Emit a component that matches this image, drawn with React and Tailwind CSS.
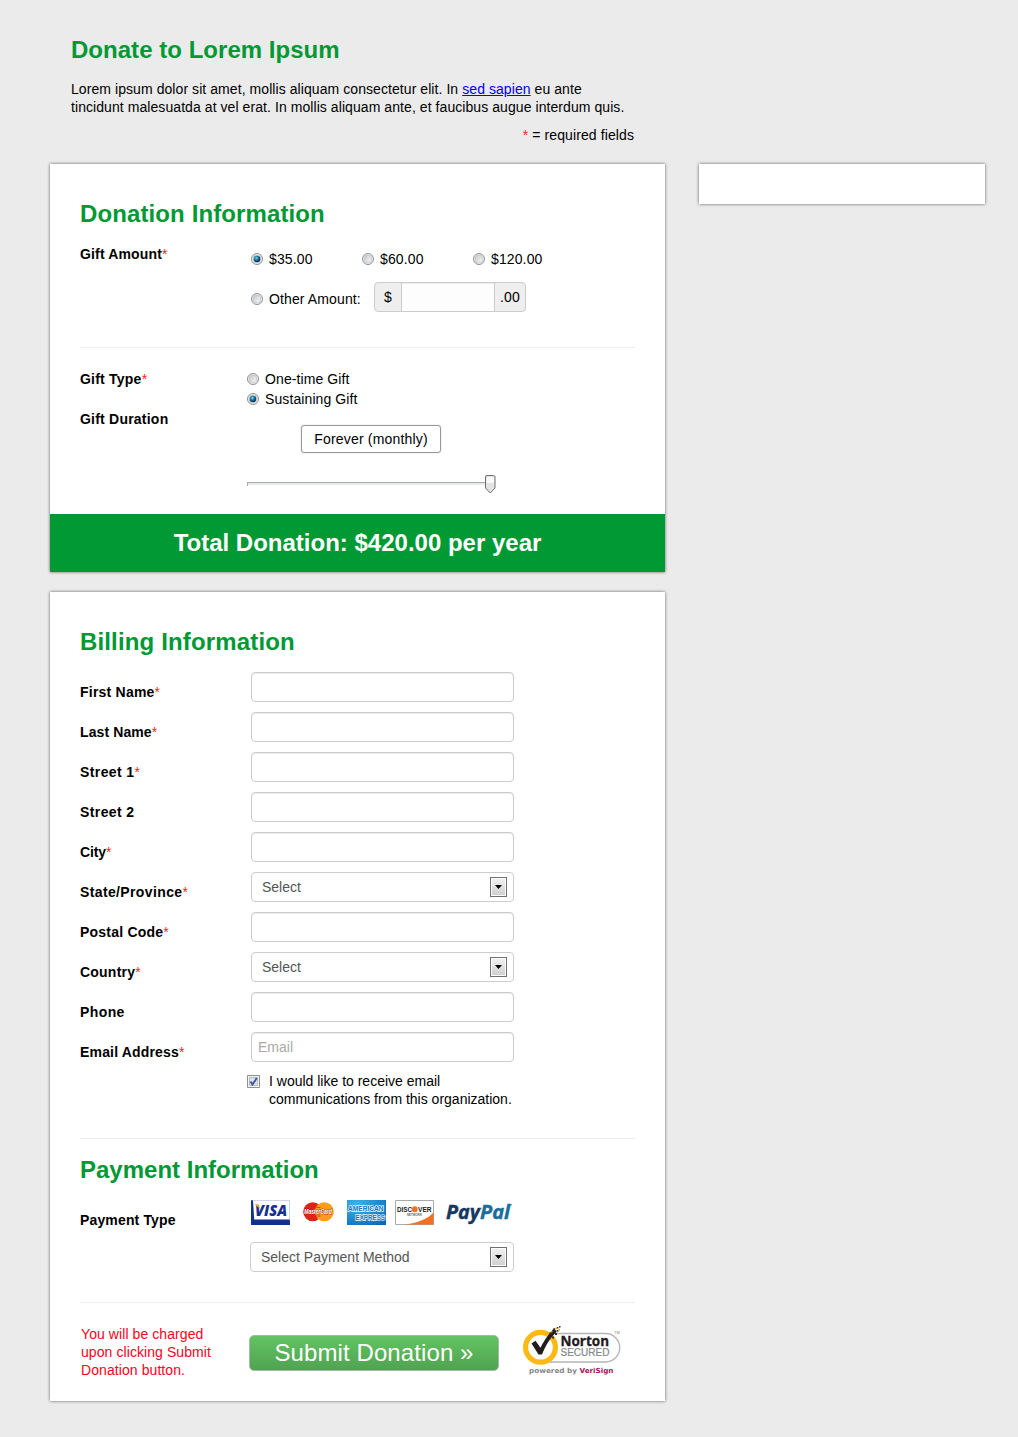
import React from "react";

const Star = () => <span className="font-normal tracking-normal text-[#ff2020]">*</span>;

const Heading = ({ children, className = "tracking-[0.11px]" }) => (
  <h2 className={"h-7 whitespace-nowrap text-2xl leading-7 font-bold text-[#009933] " + className}>{children}</h2>
);

const Radio = ({ id, checked }) => (
  <svg width="13" height="13" viewBox="0 0 13 13" className="block shrink-0">
    <defs>
      <linearGradient id={id + "g"} x1="0" y1="0" x2="1" y2="1">
        <stop offset="0" stopColor="#c4c8cb" />
        <stop offset="1" stopColor="#f8f8f8" />
      </linearGradient>
      <radialGradient id={id + "d"} cx="0.4" cy="0.35" r="0.6">
        <stop offset="0" stopColor="#8fdcf8" />
        <stop offset="0.45" stopColor="#2282ad" />
        <stop offset="1" stopColor="#0b2f4c" />
      </radialGradient>
    </defs>
    <circle cx="6" cy="6" r="5.5" fill="#f4f4f4" stroke="#8e8f8f" />
    <circle cx="6" cy="6" r="4" fill={"url(#" + id + "g)"} stroke="#b4b8bb" strokeWidth="0.6" />
    {checked && <circle cx="6" cy="6" r="3.3" fill={"url(#" + id + "d)"} />}
  </svg>
);

const Arrow = () => (
  <span className="flex h-5 w-[17px] items-center justify-center border border-[#707070] bg-linear-to-b from-[#f2f2f2] to-[#cfcfcf] shadow-[inset_0_0_0_1px_#fcfcfc]">
    <svg width="7" height="4" viewBox="0 0 7 4"><path d="M0 0h7L3.5 4z" fill="#000" /></svg>
  </span>
);

const Select = ({ children, className = "w-[263px]" }) => (
  <div className={"flex h-[30px] items-center justify-between rounded border border-[#cccccc] bg-white pr-1.5 pl-2.5 text-[#555555] " + className}>
    <span>{children}</span>
    <Arrow />
  </div>
);

const Row = ({ label, required, children, track = "tracking-[0.22px]" }) => (
  <div className="flex h-10">
    <div className={"w-[171px] pt-[11px] font-bold " + track}>{label}{required && <Star />}</div>
    {children}
  </div>
);

const Input = ({ children }) => (
  <div className="h-[30px] w-[263px] rounded border border-[#cccccc] bg-white pt-[5px] pl-1.5 text-[#aaaaaa] shadow-[inset_0_1px_1px_rgba(0,0,0,0.075)]">{children}</div>
);

const Visa = () => (
  <svg width="39" height="25" viewBox="0 0 39 25">
    <path d="M0 0H39V25H0z" fill="#fff" />
    <path d="M0 0h2l1.200 19.500H39V25H0z" fill="#10318f" />
    <path d="M0 .3H38.700V21" fill="none" stroke="#9aa6cc" strokeWidth="0.6" />
    <text x="4" y="15.6" fontSize="16" fontWeight="800" fontStyle="italic" fill="#15308f" textLength="32" lengthAdjust="spacingAndGlyphs" fontFamily="Open Sans, sans-serif">VISA</text>
    <path d="M3.500 4.200h4l1.500 4.500z" fill="#e8a435" />
  </svg>
);

const MasterCard = () => (
  <svg width="31" height="20" viewBox="0 0 31 20" className="overflow-visible">
    <circle cx="9.7" cy="9.800" r="9.5" fill="#dc2417" />
    <circle cx="21.3" cy="9.800" r="9.5" fill="#f89d1c" />
    <path d="M13.500 5.500h4M13 14h4.500" stroke="#dc2417" strokeWidth="0.8" />
    <text x="1.3" y="12.4" fontSize="7.4" fontWeight="700" fontStyle="italic" fill="#fff" stroke="#a8281a" strokeWidth="0.8" paintOrder="stroke" textLength="27.500" lengthAdjust="spacingAndGlyphs" fontFamily="Liberation Sans, sans-serif">MasterCard</text>
  </svg>
);

const Amex = () => (
  <svg width="39" height="25" viewBox="0 0 39 25">
    <defs>
      <radialGradient id="amex" cx="0.25" cy="0.2" r="1">
        <stop offset="0" stopColor="#3db6e8" />
        <stop offset="1" stopColor="#0a68ba" />
      </radialGradient>
    </defs>
    <path d="M0 0H39V25H0z" fill="url(#amex)" />
    <g fontFamily="Liberation Sans, sans-serif" fontWeight="700" fill="#1474bd" stroke="#e8f6fd" strokeWidth="1.5" paintOrder="stroke" fontSize="7.6">
      <text x="1" y="11.4" textLength="35.500" lengthAdjust="spacingAndGlyphs">AMERICAN</text>
      <text x="8.5" y="19.600" textLength="29.500" lengthAdjust="spacingAndGlyphs">EXPRESS</text>
    </g>
  </svg>
);

const Discover = () => (
  <svg width="39" height="25" viewBox="0 0 39 25">
    <path d="M.5.5h38v24H.5z" fill="#fff" stroke="#a9a9a9" />
    <path d="M38.5 12.500v12H10C24 22.500 33 18.500 38.500 12.500z" fill="#f36f21" />
    <g fontFamily="Liberation Sans, sans-serif" fontWeight="700" fill="#222">
      <text x="2" y="12" fontSize="8" textLength="15" lengthAdjust="spacingAndGlyphs">DISC</text>
      <circle cx="19.800" cy="9.200" r="2.900" fill="#f36f21" />
      <text x="23" y="12" fontSize="8" textLength="13.500" lengthAdjust="spacingAndGlyphs">VER</text>
      <text x="12" y="16.200" fontSize="3.400" fill="#666" textLength="15" lengthAdjust="spacingAndGlyphs">NETWORK</text>
    </g>
  </svg>
);

const PayPal = () => (
  <svg width="68" height="25" viewBox="0 0 68 25" className="overflow-visible">
    <g fontFamily="Open Sans, sans-serif" fontWeight="700" fontStyle="italic" fontSize="19.500" strokeWidth="0.400">
      <text x="1" y="18.500" fill="#16375f" stroke="#16375f" textLength="34" lengthAdjust="spacingAndGlyphs">Pay</text>
      <text x="35" y="18.500" fill="#1a6d9b" stroke="#1a6d9b" textLength="30" lengthAdjust="spacingAndGlyphs">Pal</text>
    </g>
    <path d="M65 4.800h2" stroke="#1a6d9b" strokeWidth="0.800" />
  </svg>
);

const Norton = () => (
  <svg width="100" height="52" viewBox="0 0 100 52" className="overflow-visible">
    <path d="M18 8.500H83.500a14 14 0 0 1 0 28.500H18" fill="#fff" stroke="#b5b5b5" strokeWidth="1.300" />
    <circle cx="18.500" cy="22.300" r="14.900" fill="#fff" stroke="#fdb913" strokeWidth="5.200" />
    <path d="M9.500 18.500l4-2.800 5 7C23 14 27 8.500 32.500 3l2 4C28 13 24 20 20 29.500h-3.500z" fill="#211d1e" />
    <path d="M27.500 7.500h2v2h-2zM31 3.500h2v2h-2zM34.500 5h1.800v1.800h-1.800zM33 8h2v2h-2zM30 11.500h2v2h-2zM35 2h1.500v1.500H35zM37 1h1.500v1.500H37z" fill="#3b3021" />
    <path d="M29 6h1.500v1.500H29zM33.500 2.500H35v1.500h-1.500zM36.500 4H38v1.500h-1.500z" fill="#d89b1a" />
    <text x="38.500" y="20.800" fontSize="13.500" fontWeight="700" fill="#1f1a1b" stroke="#1f1a1b" strokeWidth="0.300" textLength="48.500" lengthAdjust="spacingAndGlyphs" fontFamily="Open Sans, sans-serif">Norton</text>
    <text x="38.500" y="31.300" fontSize="10" fill="#85878a" stroke="#85878a" strokeWidth="0.200" textLength="49" lengthAdjust="spacing" fontFamily="Liberation Sans, sans-serif">SECURED</text>
    <text x="92" y="9" fontSize="4" fill="#888" fontFamily="Liberation Sans, sans-serif">TM</text>
    <text x="7" y="47.500" fontSize="7" fill="#85878a" fontWeight="700" textLength="48" lengthAdjust="spacingAndGlyphs" fontFamily="DejaVu Sans, sans-serif">powered by</text>
    <text x="57.500" y="47.500" fontSize="7" fontWeight="700" fill="#a90f58" textLength="34" lengthAdjust="spacingAndGlyphs" fontFamily="DejaVu Sans, sans-serif">VeriSign</text>
  </svg>
);

const card = "bg-white shadow-[0_0_3px_rgba(0,0,0,0.6)]";

export default function App() {
  return (
    <div className="flex h-[1437px] w-[1018px] items-start bg-[#ebebeb] pl-[50px] font-['Liberation_Sans',Arial,sans-serif] text-sm leading-[18px] text-black">
      <main className="w-[615px] pt-9">
        <header className="h-32 pr-[31px] pl-[21px]">
          <Heading className="tracking-[0.03px]">Donate to Lorem Ipsum</Heading>
          <p className="mt-4 tracking-[0.07px] whitespace-nowrap">
            Lorem ipsum dolor sit amet, mollis aliquam consectetur elit. In <a className="text-[#0000ee] underline">sed sapien</a> eu ante<br />
            tincidunt malesuatda at vel erat. In mollis aliquam ante, et faucibus augue interdum quis.
          </p>
          <p className="mt-2.5 text-right tracking-[0.1px]"><Star /> = required fields</p>
        </header>

        <section className={"h-[408px] " + card}>
          <div className="h-[350px] px-[30px] pt-9">
            <Heading>Donation Information</Heading>
            <div className="flex h-[120px] border-b border-[#eeeeee] pt-[17px]">
              <div className="w-[171px] font-bold tracking-[0.15px]">Gift Amount<Star /></div>
              <div className="pt-[5px] tracking-[0.12px]">
                <div className="flex">
                  <label className="flex w-[111px] items-center gap-[5px]"><Radio id="a" checked />$35.00</label>
                  <label className="flex w-[111px] items-center gap-[5px]"><Radio id="b" />$60.00</label>
                  <label className="flex items-center gap-[5px]"><Radio id="c" />$120.00</label>
                </div>
                <div className="mt-[14px] flex">
                  <label className="flex h-[34px] w-[123px] items-center gap-[5px] whitespace-nowrap [&>svg]:mt-px"><Radio id="d" />Other Amount:</label>
                  <div className="flex h-[30px] w-[152px] overflow-hidden rounded border border-[#cccccc] bg-[#eeeeee] leading-7">
                    <span className="w-[27px] border-r border-[#cccccc] text-center">$</span>
                    <span className="w-[92px] bg-[#fdfdfd] shadow-[inset_0_1px_1px_rgba(0,0,0,0.075)]" />
                    <span className="flex-1 border-l border-[#cccccc] text-center">.00</span>
                  </div>
                </div>
              </div>
            </div>
            <div className="flex pt-[22px]">
              <div className="w-[167px] font-bold tracking-[0.22px]">
                <div className="h-10">Gift Type<Star /></div>
                <div>Gift Duration</div>
              </div>
              <div className="tracking-[0.1px]">
                <label className="flex h-5 items-start gap-[5px] [&>svg]:mt-[3px]"><Radio id="e" />One-time Gift</label>
                <label className="flex h-5 items-start gap-[5px] [&>svg]:mt-[3px]"><Radio id="f" checked />Sustaining Gift</label>
                <div className="mt-[15px] ml-[54px] h-7 w-[140px] rounded-[3px] border border-[#999999] text-center leading-[26px] tracking-[0.18px] shadow-[0_0_1px_#999]">Forever (monthly)</div>
                <svg width="250" height="20" viewBox="0 0 250 20" className="mt-[22px] block">
                  <path d="M0 7.500H240M.5 7v4" stroke="#a5aaaa" />
                  <path d="M1 8.500H240M1 9.500H240" stroke="#e7eaea" />
                  <path d="M240 0h6.500q1.500 0 1.500 1.500V12.500l-4.700 5-4.800-5V1.500q0-1.500 1.500-1.500z" transform="translate(0 .5)" fill="#e3e3e3" stroke="#707070" />
                  <path d="M239.700 2h7v6h-7z" fill="#fafafa" />
                </svg>
              </div>
            </div>
          </div>
          <div className="h-[58px] bg-[#009933] text-center text-2xl leading-[58px] font-bold text-white">Total Donation: $420.00 per year</div>
        </section>

        <section className={"mt-5 h-[809px] px-[30px] pt-9 " + card}>
          <Heading className="tracking-[0.15px]">Billing Information</Heading>
          <div className="mt-4">
            <Row label="First Name" required><Input /></Row>
            <Row label="Last Name" required track="tracking-[0.1px]"><Input /></Row>
            <Row label="Street 1" required track="tracking-[0.4px]"><Input /></Row>
            <Row label="Street 2" track="tracking-[0.4px]"><Input /></Row>
            <Row label="City" required track="tracking-[-0.1px]"><Input /></Row>
            <Row label="State/Province" required track="tracking-[0.37px]"><Select>Select</Select></Row>
            <Row label="Postal Code" required><Input /></Row>
            <Row label="Country" required><Select>Select</Select></Row>
            <Row label="Phone" track="tracking-[0.4px]"><Input /></Row>
            <Row label="Email Address" required track="tracking-[0.17px]"><Input>Email</Input></Row>
          </div>
          <label className="flex h-[67px] gap-[9px] border-b border-[#eeeeee] pl-[167px]">
            <svg width="13" height="13" viewBox="0 0 13 13" className="mt-[3px] shrink-0">
              <path d="M.5.5h12v12H.5z" fill="#f4f4f4" stroke="#8e8f8f" />
              <path d="M2.500 2.500h8v8h-8z" fill="#dfe3e8" stroke="#b5bcc5" />
              <path d="M3.500 6.500l2 3L9.800 3" fill="none" stroke="#43549c" strokeWidth="1.900" />
            </svg>
            <span className="whitespace-nowrap">I would like to receive email<br />communications from this organization.</span>
          </label>

          <div className="h-[164px] border-b border-[#eeeeee] pt-[17px]">
            <Heading className="tracking-normal">Payment Information</Heading>
            <div className="mt-4 flex">
              <div className="w-[170px] pt-[11px] font-bold tracking-[0.15px]">Payment Type</div>
              <div>
                <div className="flex h-[42px] items-start pl-px">
                  <Visa />
                  <span className="mt-0.5 mr-[13px] ml-[13px]"><MasterCard /></span>
                  <Amex />
                  <span className="mr-[11px] ml-[9px]"><Discover /></span>
                  <PayPal />
                </div>
                <Select className="w-[264px]">Select Payment Method</Select>
              </div>
            </div>
          </div>

          <div className="flex pt-[22px]">
            <p className="w-[169px] pl-px tracking-[0.08px] text-[#ff0022]">You will be charged<br />upon clicking Submit<br />Donation button.</p>
            <button className="mt-[10px] h-9 w-[250px] rounded-[5px] border border-[#a9b9a9] bg-linear-to-b from-[#62c462] to-[#51a351] text-2xl leading-[34px] tracking-[0.1px] text-white">Submit Donation »</button>
            <div className="ml-[23px]"><Norton /></div>
          </div>
        </section>
      </main>
      <aside className={"mt-[164px] ml-[34px] h-10 w-[286px] " + card} />
    </div>
  );
}
